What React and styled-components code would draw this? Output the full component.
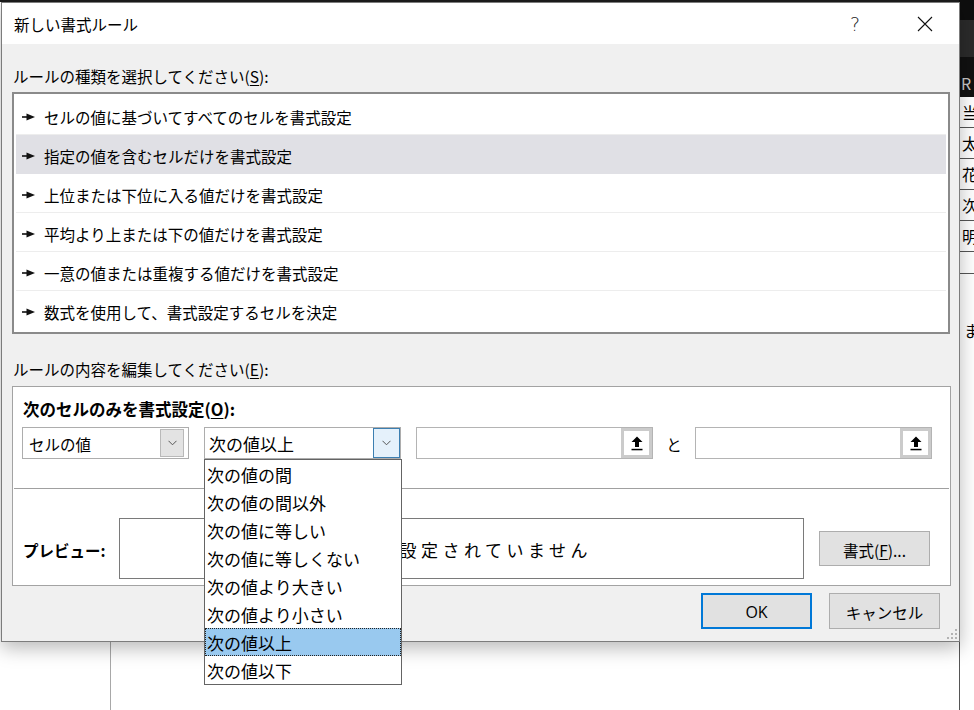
import React from 'react';
import styled, { createGlobalStyle } from 'styled-components';

const GlobalStyle = createGlobalStyle`
  html, body { margin: 0; padding: 0; background: #fff; }
  body { font-family: "Noto Sans CJK JP", "Noto Sans", sans-serif; color: #000; }
  * { box-sizing: border-box; }
`;

const FONT = `"Noto Sans CJK JP", "Noto Sans", sans-serif`;

const Screen = styled.div`
  position: relative;
  width: 974px;
  height: 710px;
  overflow: hidden;
  background: #fff;
`;

/* ---------- backdrop (spreadsheet behind the dialog) ---------- */
const Backdrop = styled.div`
  display: grid;
  grid-template-columns: 959px 15px;
  height: 100%;
`;
const SheetArea = styled.div`
  display: flex;
  flex-direction: column;
`;
const TopBand = styled.div`
  height: 2px;
  background: #1c1c1c;
`;
const SheetBody = styled.div`
  flex: 1;
  display: flex;
`;
const GridColumn = styled.div`
  width: 111px;
  border-right: 1px solid #a8a8a8;
`;
const SideStrip = styled.div`
  display: flex;
  flex-direction: column;
  font-family: ${FONT};
  font-size: 16px;
  overflow: hidden;
`;
const Band = styled.div`
  height: ${p => p.$h}px;
  background: ${p => p.$bg};
  color: #c8c8c8;
  display: flex;
  align-items: flex-end;
  padding-left: 2px;
  line-height: 20px;
  padding-bottom: 4px;
`;
const SheetCell = styled.div`
  height: ${p => p.$h || 31}px;
  border-bottom: 1px solid #555;
  border-left: 1px solid #555;
  padding-left: 2px;
  line-height: 30px;
  white-space: nowrap;
`;
const SheetFiller = styled.div`
  flex: 1;
  padding: 44px 0 0 4px;
  border-left: 1px solid #555;
  white-space: nowrap;
`;

/* ---------- dialog window ---------- */
const Window = styled.div`
  position: absolute;
  left: 1px;
  top: 2px;
  width: 959px;
  height: 640px;
  border: 1px solid #7c7c7c;
  background: #f0f0f0;
  box-shadow: 0 6px 18px rgba(0, 0, 0, 0.28);
  display: flex;
  flex-direction: column;
  font-family: ${FONT};
  font-size: 15.5px;
`;
const TitleBar = styled.div`
  height: 41px;
  background: #fff;
  display: flex;
  align-items: center;
  padding-right: 11px;
`;
const Title = styled.div`
  flex: 1;
  padding-left: 12px;
  font-size: 15.5px;
  line-height: 20px;
`;
const TitleControls = styled.div`
  display: flex;
  gap: 24px;
  height: 100%;
`;
const TitleButton = styled.div`
  width: 46px;
  height: 100%;
  display: flex;
  align-items: center;
  justify-content: center;
  font-family: "DejaVu Sans", sans-serif;
  font-weight: 200;
  font-size: 19px;
  color: #222;
`;
const Body = styled.div`
  flex: 1;
  display: flex;
  flex-direction: column;
  padding: 22px 8px 0 10px;
`;
const Label = styled.div`
  line-height: 20px;
  height: 20px;
  padding-left: 1px;
  margin-top: ${p => p.$mt || 0}px;
  white-space: nowrap;
`;
const Key = styled.span`
  text-decoration: underline;
  text-underline-offset: 2px;
`;
const RuleList = styled.div`
  margin-top: 6px;
  height: 242px;
  margin-right: 1px;
  border: 2px solid #8a8a8a;
  background: #fff;
  padding: 2px;
  display: flex;
  flex-direction: column;
`;
const RuleRow = styled.div`
  height: 39px;
  flex: none;
  display: flex;
  align-items: center;
  gap: 9px;
  padding: 3px 0 0 6px;
  background: ${p => (p.$selected ? '#e0e0e5' : '#fff')};
  border-bottom: 1px solid ${p => (p.$last || p.$selected ? 'transparent' : '#ededed')};
  white-space: nowrap;
`;
const EditBox = styled.div`
  margin-top: 7px;
  height: 200px;
  border: 1px solid #a3a3a3;
  background: #fff;
  display: flex;
  flex-direction: column;
  padding: 12px 0 0 0;
`;
const Heading = styled.div`
  padding-left: 10px;
  line-height: 20px;
  height: 20px;
  font-weight: 700;
  font-size: 16.5px;
  white-space: nowrap;
`;
const ControlsRow = styled.div`
  margin-top: 8px;
  height: 32px;
  display: flex;
  align-items: stretch;
  padding-left: 9px;
  gap: 15px;
`;
const Combo = styled.div`
  position: relative;
  width: ${p => p.$w}px;
  border: 1px solid #adadad;
  background: #fff;
  display: flex;
  align-items: center;
`;
const ComboText = styled.div`
  flex: 1;
  padding: 2px 0 0 ${p => p.$pl || 6}px;
  font-size: ${p => p.$fs || 15.5}px;
  line-height: 20px;
  white-space: nowrap;
`;
const ComboButton = styled.div`
  align-self: stretch;
  width: ${p => (p.$hot ? 27 : 24)}px;
  margin: ${p => (p.$hot ? '0' : '1px 4px 1px 0')};
  background: ${p => (p.$hot ? '#e5f1fb' : '#e3e3e3')};
  border: 1px solid ${p => (p.$hot ? '#3c7fb1' : '#b9b9b9')};
  display: flex;
  align-items: center;
  justify-content: center;
`;
const RefInput = styled.div`
  width: 237px;
  border: 1px solid #b4b4b4;
  background: #fff;
  display: flex;
  justify-content: flex-end;
`;
const RefButton = styled.div`
  width: 31px;
  border: 3px solid #cbcbcb;
  background: #fff;
  display: flex;
  align-items: center;
  justify-content: center;
`;
const Conj = styled.div`
  width: 12px;
  display: flex;
  align-items: center;
  justify-content: center;
  padding-top: 2px;
`;
const Separator = styled.div`
  margin: 29px 1px 0;
  height: 1px;
  background: #a0a0a0;
`;
const PreviewRow = styled.div`
  margin-top: 29px;
  height: 61px;
  display: flex;
  align-items: center;
`;
const PreviewLabel = styled.div`
  width: 106px;
  padding: 2px 0 0 10px;
  font-weight: 700;
  white-space: nowrap;
`;
const PreviewBox = styled.div`
  width: 685px;
  height: 100%;
  border: 1px solid #7a7a7a;
  background: #fff;
  display: flex;
  align-items: center;
  justify-content: center;
  font-size: 17px;
  letter-spacing: 4.5px;
  padding: 2px 0 0 4px;
  white-space: nowrap;
`;
const Button = styled.div`
  width: 111px;
  height: ${p => p.$h || 36}px;
  background: #e1e1e1;
  border: ${p => (p.$default ? '2px solid #0078d7' : '1px solid #adadad')};
  display: flex;
  align-items: center;
  justify-content: center;
  padding-top: 2px;
  white-space: nowrap;
  margin-left: ${p => p.$ml || 0}px;
`;
const OkText = styled.span`
  font-family: "Open Sans", "Noto Sans", sans-serif;
  font-size: 16px;
`;
const ButtonRow = styled.div`
  margin-top: 7px;
  display: flex;
  justify-content: flex-end;
  gap: 17px;
  padding-right: 11px;
`;
const Grip = styled.svg`
  position: absolute;
  right: 2px;
  bottom: 2px;
`;

/* ---------- drop-down list ---------- */
const DropList = styled.div`
  position: absolute;
  left: -1px;
  top: 31px;
  width: 198px;
  border: 1px solid #646464;
  background: #fff;
  z-index: 5;
  display: flex;
  flex-direction: column;
`;
const DropItem = styled.div`
  height: 28px;
  padding: 3px 0 0 2px;
  font-size: 17px;
  line-height: 24px;
  white-space: nowrap;
  background: ${p => (p.$selected ? '#99c9ef' : '#fff')};
  outline: ${p => (p.$selected ? '1px dotted #222' : 'none')};
  outline-offset: -1px;
`;

/* ---------- icons ---------- */
const Pointer = () => (
  <svg width="13" height="8" viewBox="0 0 13 8">
    <rect x="0" y="3.2" width="6" height="1.6" fill="#111" />
    <polygon points="4.5,0.5 13,4 4.5,7.5" fill="#111" />
  </svg>
);
const Chevron = () => (
  <svg width="9" height="6" viewBox="0 0 9 6">
    <polyline points="0.5,0.8 4.5,4.8 8.5,0.8" fill="none" stroke="#555" strokeWidth="1" />
  </svg>
);
const RefIcon = () => (
  <svg width="12" height="15" viewBox="0 0 12 15">
    <polygon points="6,0.5 11.5,6 8,6 8,11 4,11 4,6 0.5,6" fill="#000" />
    <rect x="0.5" y="12.8" width="11" height="1.5" fill="#000" />
  </svg>
);
const CloseIcon = () => (
  <svg width="16" height="16" viewBox="0 0 16 16">
    <path d="M1 1 L15 15 M15 1 L1 15" stroke="#111" strokeWidth="1.1" fill="none" />
  </svg>
);

const rules = [
  'セルの値に基づいてすべてのセルを書式設定',
  '指定の値を含むセルだけを書式設定',
  '上位または下位に入る値だけを書式設定',
  '平均より上または下の値だけを書式設定',
  '一意の値または重複する値だけを書式設定',
  '数式を使用して、書式設定するセルを決定',
];

const operators = [
  '次の値の間',
  '次の値の間以外',
  '次の値に等しい',
  '次の値に等しくない',
  '次の値より大きい',
  '次の値より小さい',
  '次の値以上',
  '次の値以下',
];

const sheetCells = ['当', '太', '花', '次', '明'];

export default function App() {
  return (
    <Screen>
      <GlobalStyle />
      <Backdrop>
        <SheetArea>
          <TopBand />
          <SheetBody>
            <GridColumn />
          </SheetBody>
        </SheetArea>
        <SideStrip>
          <Band $h={20} $bg="#0e0e0e" />
          <Band $h={37} $bg="#2b2b2b" />
          <Band $h={40} $bg="#111">R</Band>
          {sheetCells.map(c => (
            <SheetCell key={c}>{c}</SheetCell>
          ))}
          <SheetCell $h={22} />
          <SheetFiller>ま</SheetFiller>
        </SideStrip>
      </Backdrop>

      <Window>
        <TitleBar>
          <Title>新しい書式ルール</Title>
          <TitleControls>
            <TitleButton>?</TitleButton>
            <TitleButton>
              <CloseIcon />
            </TitleButton>
          </TitleControls>
        </TitleBar>
        <Body>
          <Label>
            ルールの種類を選択してください(<Key>S</Key>):
          </Label>
          <RuleList>
            {rules.map((r, i) => (
              <RuleRow key={r} $selected={i === 1} $last={i === rules.length - 1}>
                <Pointer />
                <span>{r}</span>
              </RuleRow>
            ))}
          </RuleList>
          <Label $mt={25}>
            ルールの内容を編集してください(<Key>E</Key>):
          </Label>
          <EditBox>
            <Heading>
              次のセルのみを書式設定(<Key>O</Key>):
            </Heading>
            <ControlsRow>
              <Combo $w={167}>
                <ComboText>セルの値</ComboText>
                <ComboButton>
                  <Chevron />
                </ComboButton>
              </Combo>
              <Combo $w={197}>
                <ComboText $fs={17} $pl={4}>次の値以上</ComboText>
                <ComboButton $hot>
                  <Chevron />
                </ComboButton>
                <DropList>
                  {operators.map(o => (
                    <DropItem key={o} $selected={o === '次の値以上'}>
                      {o}
                    </DropItem>
                  ))}
                </DropList>
              </Combo>
              <RefInput>
                <RefButton>
                  <RefIcon />
                </RefButton>
              </RefInput>
              <Conj>と</Conj>
              <RefInput>
                <RefButton>
                  <RefIcon />
                </RefButton>
              </RefInput>
            </ControlsRow>
            <Separator />
            <PreviewRow>
              <PreviewLabel>プレビュー:</PreviewLabel>
              <PreviewBox>書式が設定されていません</PreviewBox>
              <Button $h={35} $ml={15}>
                書式(<Key>F</Key>)...
              </Button>
            </PreviewRow>
          </EditBox>
          <ButtonRow>
            <Button $default>
              <OkText>OK</OkText>
            </Button>
            <Button>キャンセル</Button>
          </ButtonRow>
        </Body>
        <Grip width="10" height="10" viewBox="0 0 10 10">
          <rect x="8" y="0" width="2" height="2" fill="#b3b3b3" />
          <rect x="4" y="4" width="2" height="2" fill="#b3b3b3" />
          <rect x="8" y="4" width="2" height="2" fill="#b3b3b3" />
          <rect x="0" y="8" width="2" height="2" fill="#b3b3b3" />
          <rect x="4" y="8" width="2" height="2" fill="#b3b3b3" />
          <rect x="8" y="8" width="2" height="2" fill="#b3b3b3" />
        </Grip>
      </Window>
    </Screen>
  );
}
